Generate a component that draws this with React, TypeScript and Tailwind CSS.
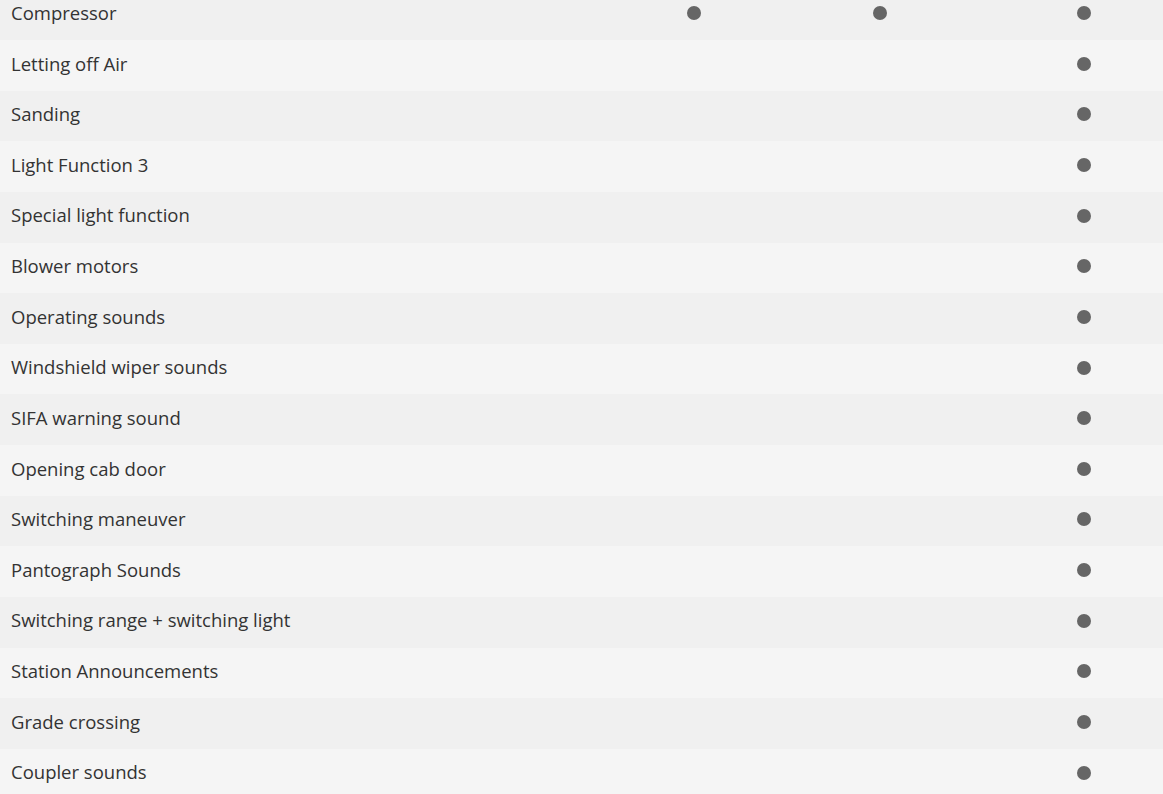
import React from 'react';

type Row = { label: string; cols: [boolean, boolean, boolean] };

const rows: Row[] = [
  { label: 'Compressor', cols: [true, true, true] },
  { label: 'Letting off Air', cols: [false, false, true] },
  { label: 'Sanding', cols: [false, false, true] },
  { label: 'Light Function 3', cols: [false, false, true] },
  { label: 'Special light function', cols: [false, false, true] },
  { label: 'Blower motors', cols: [false, false, true] },
  { label: 'Operating sounds', cols: [false, false, true] },
  { label: 'Windshield wiper sounds', cols: [false, false, true] },
  { label: 'SIFA warning sound', cols: [false, false, true] },
  { label: 'Opening cab door', cols: [false, false, true] },
  { label: 'Switching maneuver', cols: [false, false, true] },
  { label: 'Pantograph Sounds', cols: [false, false, true] },
  { label: 'Switching range + switching light', cols: [false, false, true] },
  { label: 'Station Announcements', cols: [false, false, true] },
  { label: 'Grade crossing', cols: [false, false, true] },
  { label: 'Coupler sounds', cols: [false, false, true] },
];

const Dot = ({ on }: { on: boolean }) => (
  <div className="flex items-center justify-center">
    {on && <span className="block w-[14px] h-[14px] rounded-full bg-[#666666]" />}
  </div>
);

export default function App() {
  return (
    <div className="w-full h-[794px] overflow-hidden bg-[#f5f5f5] font-['Open_Sans',sans-serif] text-[#333333]">
      <div className="mt-[-10.6px]">
        {rows.map((row, idx) => (
          <div
            key={idx}
            className={`grid grid-cols-[647px_94px_278px_130px_1fr] items-center h-[50.64px] pb-[3px] ${
              idx % 2 === 0 ? 'bg-[#f0f0f0]' : 'bg-[#f5f5f5]'
            }`}
          >
            <div className="pl-[11px] text-[18.5px] leading-none">{row.label}</div>
            <Dot on={row.cols[0]} />
            <Dot on={row.cols[1]} />
            <Dot on={row.cols[2]} />
            <div />
          </div>
        ))}
      </div>
    </div>
  );
}
